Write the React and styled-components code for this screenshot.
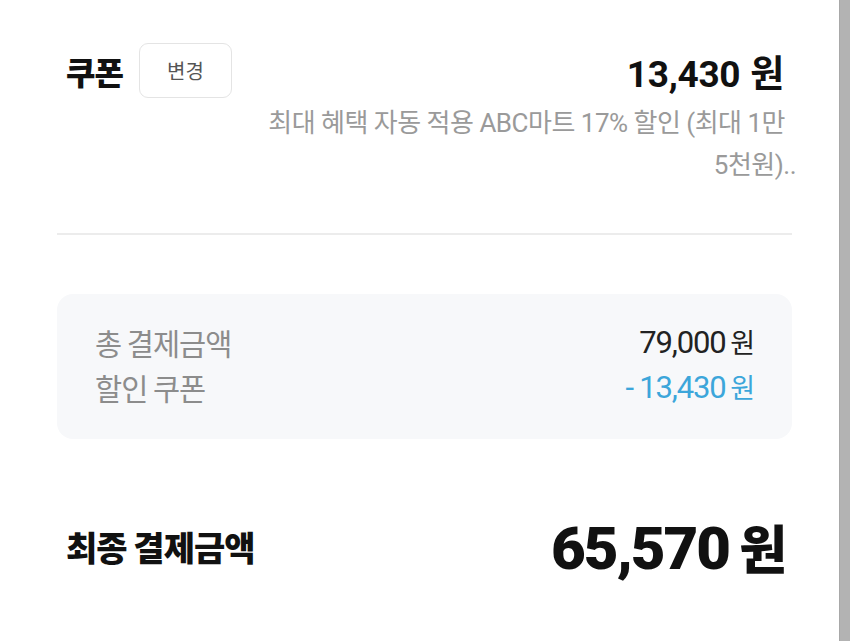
import styled, { createGlobalStyle } from "styled-components";

const GlobalStyle = createGlobalStyle`
  html, body {
    margin: 0;
    padding: 0;
    background: #ffffff;
  }
  body {
    font-family: Roboto, "Noto Sans CJK KR", sans-serif;
    color: #111;
  }
`;

const Page = styled.div`
  display: flex;
  width: 850px;
  height: 641px;
  overflow: hidden;
`;

const Content = styled.div`
  flex: 1;
  padding: 43px 47px 0 57px;
`;

const Scrollbar = styled.div`
  width: 10px;
  background: #b3b3b3;
  border-left: 1px solid #a8a8a8;
`;

const CouponSection = styled.section`
  padding: 0 8px 0 9px;
`;

const CouponRow = styled.div`
  display: flex;
  align-items: center;
  justify-content: space-between;
`;

const CouponLeft = styled.div`
  display: flex;
  align-items: center;
  gap: 16px;
`;

const SectionTitle = styled.h2`
  margin: 0;
  font-family: "Noto Sans CJK KR", sans-serif;
  font-size: 32px;
  font-weight: 800;
  color: #111;
  letter-spacing: -1px;
`;

const ChangeButton = styled.button`
  width: 93px;
  height: 55px;
  border: 1.5px solid #e4e4e4;
  border-radius: 9px;
  background: #fff;
  font-family: "Noto Sans CJK KR", sans-serif;
  font-size: 20px;
  color: #555;
  cursor: pointer;
`;

const CouponAmount = styled.div`
  font-size: 37px;
  font-weight: 700;
  color: #111;
  letter-spacing: -0.3px;
`;

const Description = styled.p`
  margin: 4px -1px 0 0;
  text-align: right;
  font-family: Roboto, "Noto Sans CJK KR", sans-serif;
  font-size: 26px;
  line-height: 42px;
  color: #9a9a9a;
  letter-spacing: -0.5px;
`;

const Overflow = styled.span`
  margin-right: -11px;
`;

const Divider = styled.hr`
  margin: 47px 0 0;
  border: none;
  height: 2px;
  background: #ececec;
`;

const SummaryBox = styled.div`
  margin-top: 59px;
  height: 145px;
  box-sizing: border-box;
  padding: 25px 38px 0 38px;
  background: #f7f8fa;
  border-radius: 16px;
  display: flex;
  flex-direction: column;
`;

const SummaryRow = styled.div`
  display: flex;
  justify-content: space-between;
  align-items: center;
  height: 45px;
`;

const SummaryLabel = styled.span`
  color: #8c8c8c;
  font-family: "Noto Sans CJK KR", sans-serif;
  font-size: 29.5px;
  font-weight: 400;
  letter-spacing: -1px;
`;

const SummaryValue = styled.span`
  color: ${(props) => (props.type === "discount" ? "#3ca6da" : "#222")};
  font-family: Roboto, "Noto Sans CJK KR", sans-serif;
  font-size: 31px;
  letter-spacing: -1.2px;
`;

const FinalRow = styled.div`
  margin-top: 70px;
  padding: 0 7px 0 9px;
  display: flex;
  justify-content: space-between;
  align-items: center;
`;

const FinalLabel = styled.div`
  font-family: "Noto Sans CJK KR", sans-serif;
  font-size: 34px;
  font-weight: 800;
  letter-spacing: -1px;
  color: #111;
`;

const FinalAmount = styled.div`
  font-size: 60px;
  font-weight: 900;
  letter-spacing: -2px;
  color: #111;
`;

const Won = styled.span`
  font-size: ${(props) => props.size || "inherit"};
  margin-left: ${(props) => props.gap || "8px"};
`;

const App = () => {
  return (
    <Page>
      <GlobalStyle />
      <Content>
        <CouponSection>
          <CouponRow>
            <CouponLeft>
              <SectionTitle>쿠폰</SectionTitle>
              <ChangeButton>변경</ChangeButton>
            </CouponLeft>
            <CouponAmount>
              13,430<Won gap="10px">원</Won>
            </CouponAmount>
          </CouponRow>
          <Description>
            최대 혜택 자동 적용 ABC마트 17% 할인 (최대 1만
            <br />
            5천원)<Overflow>..</Overflow>
          </Description>
        </CouponSection>
        <Divider />
        <SummaryBox>
          <SummaryRow>
            <SummaryLabel>총 결제금액</SummaryLabel>
            <SummaryValue>
              79,000<Won gap="5px" size="27px">원</Won>
            </SummaryValue>
          </SummaryRow>
          <SummaryRow>
            <SummaryLabel>할인 쿠폰</SummaryLabel>
            <SummaryValue type="discount">
              - 13,430<Won gap="5px" size="27px">원</Won>
            </SummaryValue>
          </SummaryRow>
        </SummaryBox>
        <FinalRow>
          <FinalLabel>최종 결제금액</FinalLabel>
          <FinalAmount>
            65,570<Won gap="10px" size="52px">원</Won>
          </FinalAmount>
        </FinalRow>
      </Content>
      <Scrollbar />
    </Page>
  );
};

export default App;
